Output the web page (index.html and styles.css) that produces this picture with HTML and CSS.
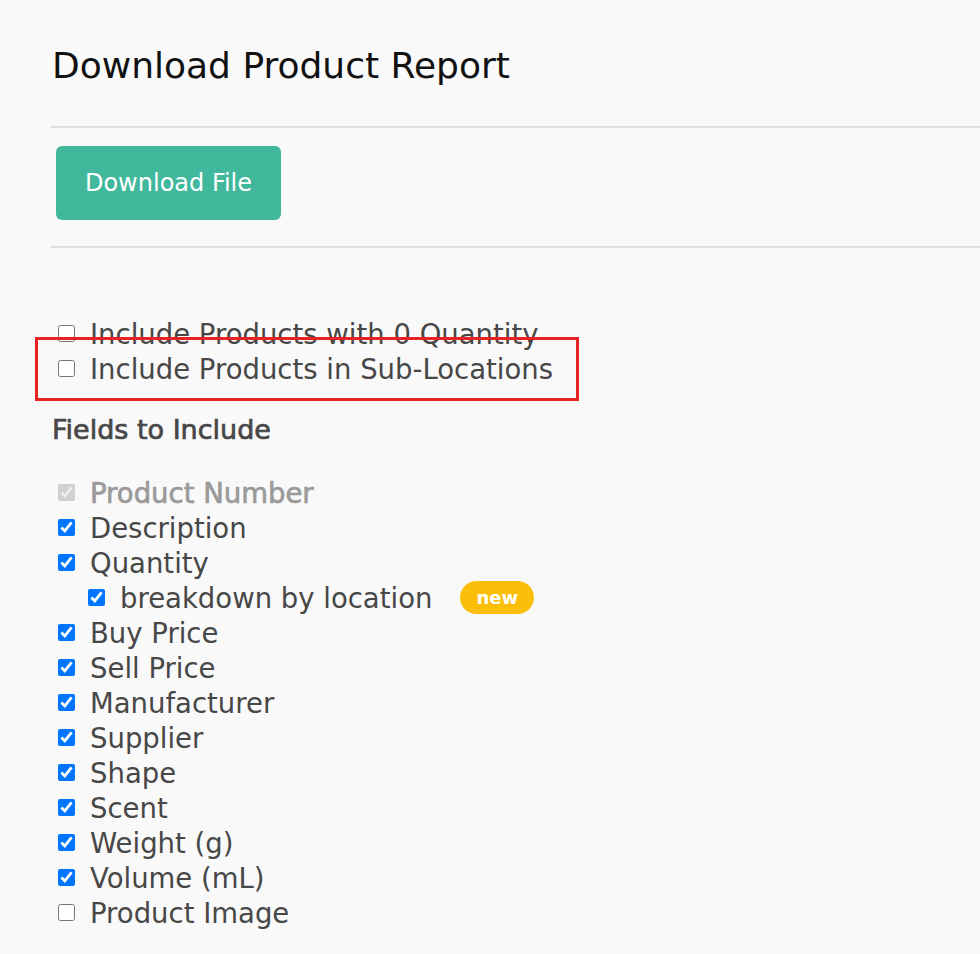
FILE: index.html
```html
<!DOCTYPE html>
<html>
  <head>
    <meta charset="utf-8">
    <title>Download Product Report</title>
    <link rel="stylesheet" href="styles.css">
  </head>
  <body>
    <div class="report">
      <h1 class="report-title">Download Product Report</h1>
      <hr>
      <div class="actions">
        <button class="btn-download">Download File</button>
      </div>
      <hr>

      <div class="options">
        <label class="check"><input type="checkbox"> Include Products with 0 Quantity</label>
        <label class="check marked"><input type="checkbox"> Include Products in Sub-Locations</label>
      </div>

      <h2 class="fields-title">Fields to Include</h2>
      <div class="fields">
        <label class="check locked"><input type="checkbox" checked disabled> Product Number</label>
        <label class="check"><input type="checkbox" checked> Description</label>
        <label class="check"><input type="checkbox" checked> Quantity</label>
        <label class="check sub"><input type="checkbox" checked> breakdown by location <span class="badge">new</span></label>
        <label class="check"><input type="checkbox" checked> Buy Price</label>
        <label class="check"><input type="checkbox" checked> Sell Price</label>
        <label class="check"><input type="checkbox" checked> Manufacturer</label>
        <label class="check"><input type="checkbox" checked> Supplier</label>
        <label class="check"><input type="checkbox" checked> Shape</label>
        <label class="check"><input type="checkbox" checked> Scent</label>
        <label class="check"><input type="checkbox" checked> Weight (g)</label>
        <label class="check"><input type="checkbox" checked> Volume (mL)</label>
        <label class="check"><input type="checkbox"> Product Image</label>
      </div>
    </div>
  </body>
</html>
```

FILE: styles.css
```css
* { box-sizing: border-box; }
body {
  margin: 0;
  background: #f9f9f9;
  color: #474747;
  font-family: "DejaVu Sans", sans-serif;
}
.report {
  padding-left: 51px;
  padding-top: 40px;
}
.report-title {
  margin: 0 0 0 1px;
  font-size: 36px;
  font-weight: normal;
  line-height: 52px;
  color: #111;
}
hr {
  border: 0;
  border-top: 2px solid #e0e0e0;
  margin: 0;
}
.report-title + hr {
  margin-top: 34px;
}
.actions {
  padding: 18px 0 26px 5px;
}
.btn-download {
  width: 225px;
  height: 74px;
  border: 0;
  border-radius: 6px;
  background: #41b89c;
  color: #fff;
  font-family: inherit;
  font-size: 24px;
}
.options {
  padding-top: 68px;
}
.check {
  display: flex;
  align-items: center;
  height: 35px;
  font-size: 27.5px;
}
.check input {
  width: 17px;
  height: 17px;
  margin: 0 15px 0 7px;
}
.marked {
  position: relative;
}
/* highlight frame around the sub-locations option */
.marked::after {
  content: "";
  position: absolute;
  left: -16px;
  top: -14px;
  width: 544px;
  height: 64px;
  box-sizing: border-box;
  border: 3px solid #e62222;
}
.fields-title {
  margin: 26px 0 27px 1px;
  font-size: 27px;
  font-weight: normal;
  -webkit-text-stroke: 0.7px #474747;
  line-height: 36px;
}
.locked {
  color: #9a9a9a;
  -webkit-text-stroke: 0.7px #9a9a9a;
}
.sub {
  padding-left: 30px;
}
.badge {
  margin-left: 28px;
  padding: 0 16px;
  border-radius: 17px;
  background: #fcbf09;
  color: #fff;
  font-size: 18px;
  font-weight: 600;
  line-height: 33px;
}
```
